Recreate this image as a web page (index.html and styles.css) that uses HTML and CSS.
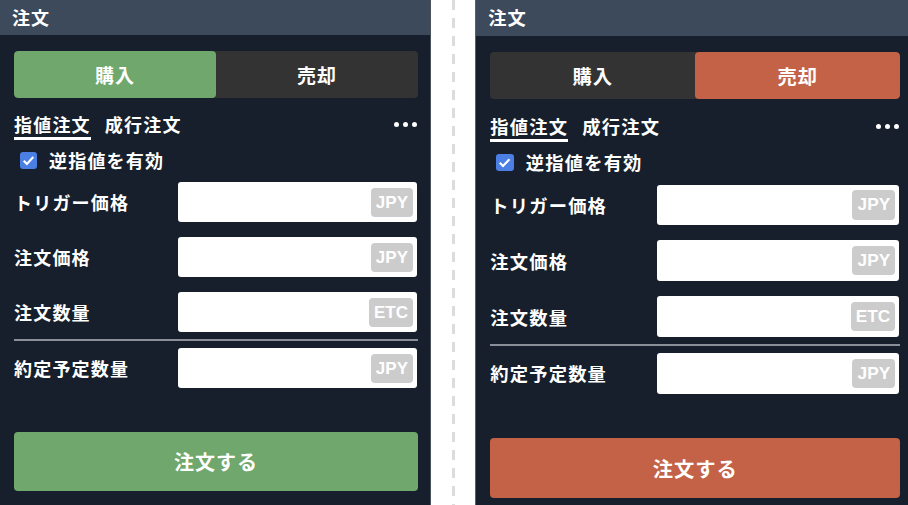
FILE: index.html
```html
<!DOCTYPE html>
<html lang="ja">
<head>
    <meta charset="UTF-8">
    <meta name="viewport" content="width=device-width, initial-scale=1.0">
    <title>注文</title>
    <link rel="stylesheet" href="styles.css">
</head>
<body>

    <!-- Buy side -->
    <section class="order-panel">
        <header class="panel-header">注文</header>
        <div class="panel-body">
            <div class="side-toggle">
                <button class="side-btn buy active">購入</button>
                <button class="side-btn">売却</button>
            </div>

            <div class="order-tabs">
                <span class="tab active">指値注文</span>
                <span class="tab">成行注文</span>
                <span class="more"><i></i><i></i><i></i></span>
            </div>

            <label class="stop-check">
                <span class="checkbox"><svg viewBox="0 0 16 16"><path d="M3.5 8.2l3 3 6-6.4" /></svg></span>
                逆指値を有効
            </label>

            <div class="field">
                <span class="field-label">トリガー価格</span>
                <div class="field-input"><span class="unit">JPY</span></div>
            </div>
            <div class="field">
                <span class="field-label">注文価格</span>
                <div class="field-input"><span class="unit">JPY</span></div>
            </div>
            <div class="field">
                <span class="field-label">注文数量</span>
                <div class="field-input"><span class="unit">ETC</span></div>
            </div>
            <hr class="divider">
            <div class="field">
                <span class="field-label">約定予定数量</span>
                <div class="field-input"><span class="unit">JPY</span></div>
            </div>

            <button class="submit-btn buy">注文する</button>
        </div>
    </section>

    <div class="spacer"><span class="dash-line"></span></div>

    <!-- Sell side -->
    <section class="order-panel sell-panel">
        <header class="panel-header">注文</header>
        <div class="panel-body">
            <div class="side-toggle">
                <button class="side-btn">購入</button>
                <button class="side-btn sell active">売却</button>
            </div>

            <div class="order-tabs">
                <span class="tab active">指値注文</span>
                <span class="tab">成行注文</span>
                <span class="more"><i></i><i></i><i></i></span>
            </div>

            <label class="stop-check">
                <span class="checkbox"><svg viewBox="0 0 16 16"><path d="M3.5 8.2l3 3 6-6.4" /></svg></span>
                逆指値を有効
            </label>

            <div class="field">
                <span class="field-label">トリガー価格</span>
                <div class="field-input"><span class="unit">JPY</span></div>
            </div>
            <div class="field">
                <span class="field-label">注文価格</span>
                <div class="field-input"><span class="unit">JPY</span></div>
            </div>
            <div class="field">
                <span class="field-label">注文数量</span>
                <div class="field-input"><span class="unit">ETC</span></div>
            </div>
            <hr class="divider">
            <div class="field">
                <span class="field-label">約定予定数量</span>
                <div class="field-input"><span class="unit">JPY</span></div>
            </div>

            <button class="submit-btn sell">注文する</button>
        </div>
    </section>

</body>
</html>
```

FILE: styles.css
```css
/* General Styling */
body {
    margin: 0;
    padding: 0;
    background: #ffffff;
    font-family: 'Noto Sans CJK JP', 'Noto Sans', sans-serif;
    font-weight: bold;
    color: #ffffff;
    display: flex;
    height: 505px;
    overflow: hidden;
}

.order-panel {
    width: 430px;
    flex-shrink: 0;
    background: #161f2b;
    border-right: 1px solid #4a525c;
}

.sell-panel {
    border-right: none;
    border-left: 1px solid #5a6068;
    zoom: 1.015;
}

.panel-header {
    height: 35px;
    line-height: 35px;
    padding-left: 12px;
    background: #3d4a5c;
    font-size: 18px;
    letter-spacing: 1px;
}

.panel-body {
    padding: 16px 12px 0 14px;
}

/* Buy / Sell switch */
.side-toggle {
    display: flex;
    height: 47px;
    background: #333333;
    border-radius: 4px;
    overflow: hidden;
}

.side-btn {
    flex: 1;
    border: none;
    background: transparent;
    color: #ffffff;
    font-family: inherit;
    font-weight: bold;
    font-size: 19px;
    letter-spacing: 1px;
    border-radius: 4px;
}

.side-btn.buy.active {
    background: #6fa76c;
}

.side-btn.sell.active {
    background: #c46247;
}

/* Order type tabs */
.order-tabs {
    display: flex;
    align-items: center;
    gap: 14px;
    margin-top: 13px;
}

.tab {
    font-size: 18px;
    line-height: 26px;
    letter-spacing: 1.2px;
    border-bottom: 3px solid transparent;
}

.tab.active {
    border-bottom-color: #ffffff;
}

.more {
    margin-left: auto;
    margin-right: 1px;
    display: flex;
    gap: 4px;
    padding-bottom: 2px;
}

.more i {
    width: 5px;
    height: 5px;
    border-radius: 50%;
    background: #ffffff;
}

/* Stop order checkbox */
.stop-check {
    display: flex;
    align-items: center;
    gap: 12px;
    height: 24px;
    margin-top: 8px;
    padding-left: 6px;
    font-size: 18px;
    letter-spacing: 1.2px;
}

.checkbox {
    width: 17px;
    height: 17px;
    border-radius: 3px;
    background: #4b7fe3;
    display: flex;
}

.checkbox svg {
    width: 17px;
    height: 17px;
    fill: none;
    stroke: #ffffff;
    stroke-width: 2;
}

/* Input rows */
.field {
    display: grid;
    grid-template-columns: 164px 1fr;
    align-items: center;
    margin-top: 15px;
    margin-right: 1px;
}

.stop-check + .field {
    margin-top: 10px;
}

.field-label {
    font-size: 18px;
    letter-spacing: 1.2px;
}

.field-input {
    height: 40px;
    background: #ffffff;
    border-radius: 3px;
    display: flex;
    align-items: center;
    justify-content: flex-end;
    padding-right: 4px;
}

.unit {
    background: #cccccc;
    color: #ffffff;
    font-family: 'Liberation Sans', Arial, sans-serif;
    font-size: 17px;
    line-height: 29px;
    padding: 0 5px;
    border-radius: 4px;
}

.divider {
    border: none;
    height: 2px;
    background: #8b9098;
    margin: 7px 0 -8px;
}

/* Submit */
.submit-btn {
    display: block;
    width: 100%;
    height: 59px;
    margin-top: 44px;
    border: none;
    border-radius: 4px;
    color: #ffffff;
    font-family: inherit;
    font-weight: bold;
    font-size: 20px;
    letter-spacing: 1px;
}

.submit-btn.buy {
    background: #6fa76c;
}

.submit-btn.sell {
    background: #c46247;
}

/* Gap between the two panels */
.spacer {
    width: 44px;
    flex-shrink: 0;
    display: flex;
    justify-content: center;
}

.dash-line {
    width: 3px;
    height: 100%;
    background: repeating-linear-gradient(to bottom, #dcdcdc 0 10px, transparent 10px 18px);
}
```
